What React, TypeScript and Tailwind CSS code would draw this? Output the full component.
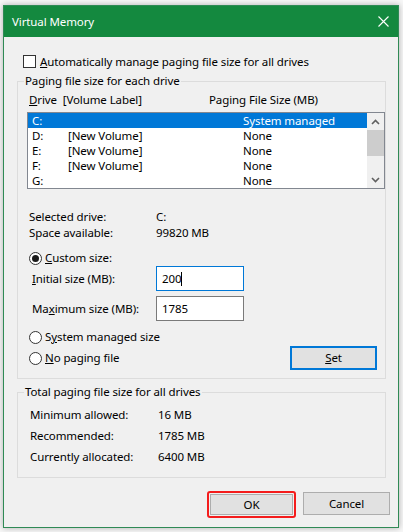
import React from 'react';

function Radio({ checked }: { checked?: boolean }) {
    return (
        <span className="flex h-[13px] w-[13px] shrink-0 items-center justify-center rounded-full border border-[#333] bg-white">
            {checked && <span className="h-[7px] w-[7px] rounded-full bg-[#1a1a1a]" />}
        </span>
    );
}

function Chevron({ down }: { down?: boolean }) {
    return (
        <svg width="9" height="6" viewBox="0 0 9 6" className={down ? 'rotate-180' : ''}>
            <path d="M1 5 L4.5 1.5 L8 5" fill="none" stroke="#606060" strokeWidth="1.6" />
        </svg>
    );
}

const drives = [
    { letter: 'C:', label: '', size: 'System managed' },
    { letter: 'D:', label: '[New Volume]', size: 'None' },
    { letter: 'E:', label: '[New Volume]', size: 'None' },
    { letter: 'F:', label: '[New Volume]', size: 'None' },
    { letter: 'G:', label: '', size: 'None' },
];

export default function App() {
    return (
        <div className="h-[532px] w-[403px] bg-[#f7f7f7] pl-[3px] pt-[5px] font-['Noto_Sans',sans-serif] text-[11.5px] leading-[16px] tracking-[-0.1px] text-black">
            <div className="flex h-[523px] w-[396px] flex-col border border-[#2f8a55] bg-[#f0f0f0] shadow-[0_0_6px_rgba(0,0,0,0.3)]">
                {/* title bar */}
                <div className="flex h-[31px] shrink-0 items-center bg-[#14893f] pl-[8px] pr-[9px] text-white">
                    <span>Virtual Memory</span>
                    <svg width="11" height="11" viewBox="0 0 11 11" className="ml-auto">
                        <path d="M0.5 0.5 L10.5 10.5 M10.5 0.5 L0.5 10.5" stroke="white" strokeWidth="1.1" />
                    </svg>
                </div>

                <div className="flex flex-col">
                    <div className="ml-[19px] mt-[18px] flex h-[13px] items-center">
                        <span className="h-[13px] w-[13px] border border-[#333] bg-white" />
                        <span className="ml-[4px]"><span className="underline">A</span>utomatically manage paging file size for all drives</span>
                    </div>

                    {/* paging file size for each drive */}
                    <div className="relative ml-[13px] mt-[13px] flex h-[298px] w-[369px] flex-col border border-[#dcdcdc]">
                        <span className="absolute -top-[9px] left-[6px] bg-[#f0f0f0] px-[1px]">Paging file size for each drive</span>
                        <div className="mt-[10px] flex h-[16px] pl-[11px]">
                            <span className="w-[180px]"><span className="underline">D</span>rive&nbsp;&nbsp;[Volume Label]</span>
                            <span>Paging File Size (MB)</span>
                        </div>
                        <div className="ml-[9px] mt-[4px] flex h-[77px] w-[358px] border border-[#828790] bg-white">
                            <div className="w-[339px]">
                                {drives.map((d, i) => (
                                    <div key={d.letter} className={`flex h-[15px] items-center leading-[14px] ${i === 0 ? 'bg-[#0078d7] text-white' : ''}`}>
                                        <span className="w-[40px] pl-[4px]">{d.letter}</span>
                                        <span className="w-[175px]">{d.label}</span>
                                        <span>{d.size}</span>
                                    </div>
                                ))}
                            </div>
                            <div className="flex w-[17px] flex-col bg-[#f0f0f0]">
                                <div className="flex h-[17px] items-center justify-center"><Chevron /></div>
                                <div className="h-[26px] bg-[#cdcdcd]" />
                                <div className="flex-1" />
                                <div className="flex h-[17px] items-center justify-center"><Chevron down /></div>
                            </div>
                        </div>

                        <div className="mt-[20px] flex h-[16px] pl-[11px]">
                            <span className="w-[127px]">Selected drive:</span>
                            <span>C:</span>
                        </div>
                        <div className="flex h-[16px] pl-[11px]">
                            <span className="w-[127px]">Space available:</span>
                            <span>99820 MB</span>
                        </div>

                        <div className="mt-[9px] flex h-[16px] items-center pl-[11px]">
                            <Radio checked />
                            <span className="ml-[3px]"><span className="underline">C</span>ustom size:</span>
                        </div>
                        <div className="flex h-[25px] items-center pl-[14px]">
                            <span className="w-[124px]"><span className="underline">I</span>nitial size (MB):</span>
                            <div className="flex h-[25px] w-[88px] items-center border border-[#0078d7] bg-white pl-[5px]">
                                <span>200</span>
                                <span className="h-[14px] w-px bg-black" />
                            </div>
                        </div>
                        <div className="mt-[5px] flex h-[25px] items-center pl-[14px]">
                            <span className="w-[124px]">Ma<span className="underline">x</span>imum size (MB):</span>
                            <div className="flex h-[25px] w-[88px] items-center border border-[#7a7a7a] bg-white pl-[5px]">
                                <span>1785</span>
                            </div>
                        </div>

                        <div className="mt-[8px] flex h-[16px] items-center pl-[11px]">
                            <Radio />
                            <span className="ml-[3px]">S<span className="underline">y</span>stem managed size</span>
                        </div>
                        <div className="mt-[1px] flex h-[24px] items-center pl-[11px] pr-[8px]">
                            <Radio />
                            <span className="ml-[3px]"><span className="underline">N</span>o paging file</span>
                            <button className="ml-auto flex h-[24px] w-[87px] items-center justify-center border-2 border-[#0078d7] bg-[#e1e1e1]">
                                <span><span className="underline">S</span>et</span>
                            </button>
                        </div>
                    </div>

                    {/* totals */}
                    <div className="relative ml-[13px] mt-[13px] flex h-[86px] w-[369px] flex-col border border-[#dcdcdc]">
                        <span className="absolute -top-[9px] left-[6px] bg-[#f0f0f0] px-[1px]">Total paging file size for all drives</span>
                        <div className="mt-[11px] flex h-[21px] items-center pl-[12px]">
                            <span className="w-[128px]">Minimum allowed:</span>
                            <span>16 MB</span>
                        </div>
                        <div className="flex h-[21px] items-center pl-[12px]">
                            <span className="w-[128px]">Recommended:</span>
                            <span>1785 MB</span>
                        </div>
                        <div className="flex h-[21px] items-center pl-[12px]">
                            <span className="w-[128px]">Currently allocated:</span>
                            <span>6400 MB</span>
                        </div>
                    </div>

                    <div className="mt-[13px] flex items-start justify-end gap-[7px] pr-[8px]">
                        <div className="h-[27px] w-[89px] rounded-[3px] border-2 border-[#f41c1c] p-px">
                            <button className="flex h-full w-full items-center justify-center border border-[#adadad] bg-[#e1e1e1]">OK</button>
                        </div>
                        <button className="mt-px flex h-[23px] w-[87px] items-center justify-center border border-[#adadad] bg-[#e1e1e1]">Cancel</button>
                    </div>
                </div>
            </div>
        </div>
    );
}
